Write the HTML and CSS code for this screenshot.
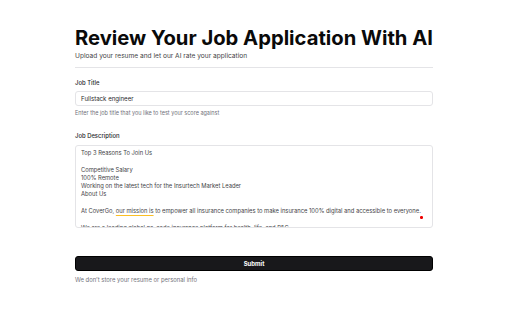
FILE: index.html
```html
<!DOCTYPE html>
<html>
<head>
<meta charset="utf-8">
<link rel="stylesheet" href="styles.css">
</head>
<body>
<main class="page">
  <h1 class="title">Review Your Job Application With AI</h1>
  <p class="subtitle">Upload your resume and let our AI rate your application</p>
  <hr class="divider">
  <div class="field">
    <label class="label">Job Title</label>
    <div class="input">Fullstack engineer</div>
    <p class="help">Enter the job title that you like to test your score against</p>
  </div>
  <div class="field field-desc">
    <label class="label">Job Description</label>
    <div class="textarea">
      <div class="ta-text">Top 3 Reasons To Join Us<br><br>Competitive Salary<br>100% Remote<br>Working on the latest tech for the Insurtech Market Leader<br>About Us<br><br>At CoverGo, <span class="mark">our mission is</span> to empower all insurance companies to make insurance 100% digital and accessible to everyone.<br><br>We are a leading global no-code insurance platform for health, life, and P&amp;C.</div>
      <span class="dot"></span>
    </div>
  </div>
  <button class="submit">Submit</button>
  <p class="note">We don’t store your resume or personal info</p>
</main>
</body>
</html>
```

FILE: styles.css
```css
* { box-sizing: border-box; }
html, body { margin: 0; padding: 0; background: #fff; }
body { font-family: Inter, "Noto Sans", sans-serif; color: #111; }
.page { padding: 26px 79px 0 75px; display: flex; flex-direction: column; }
.title { margin: 0; font-size: 20.2px; font-weight: 700; line-height: 24px; color: #0a0a0a; white-space: nowrap; }
.subtitle { margin: 1px 0 0; font-size: 6.6px; line-height: 11px; color: #3f3f46; }
.divider { margin: 5px 0 0; border: 0; border-top: 1px solid #e4e4e7; height: 0; }
.field { display: flex; flex-direction: column; margin-top: 10px; }
.field-desc { margin-top: 14px; }
.label { font-size: 5.9px; line-height: 10px; font-weight: 500; color: #27272a; }
.input { margin-top: 3px; height: 15px; border: 1px solid #e4e4e7; border-radius: 3px; padding: 0 5px; font-size: 6.1px; line-height: 13px; color: #27272a; }
.help { margin: 3px 0 0; font-size: 5.5px; line-height: 8px; color: #71717a; }
.textarea { position: relative; margin-top: 4px; height: 83px; border: 1px solid #e4e4e7; border-radius: 3px; padding: 3px 5px 0; overflow: hidden; }
.ta-text { font-size: 5.8px; line-height: 8.3px; color: #3f3f46; white-space: nowrap; }
.mark { text-decoration: underline; text-decoration-color: #fbbf24; text-decoration-thickness: 1px; text-underline-offset: 1.5px; }
.dot { position: absolute; left: 344px; top: 70px; width: 2.5px; height: 2.5px; border-radius: 50%; background: #e00; }
.submit { margin-top: 28px; height: 15px; border: 1px solid #000; border-radius: 3px; background: #18181b; color: #fff; font-family: Inter, sans-serif; font-size: 6px; font-weight: 700; padding: 0; }
.note { margin: 5px 0 0; font-size: 5.9px; line-height: 8px; color: #71717a; }
```
